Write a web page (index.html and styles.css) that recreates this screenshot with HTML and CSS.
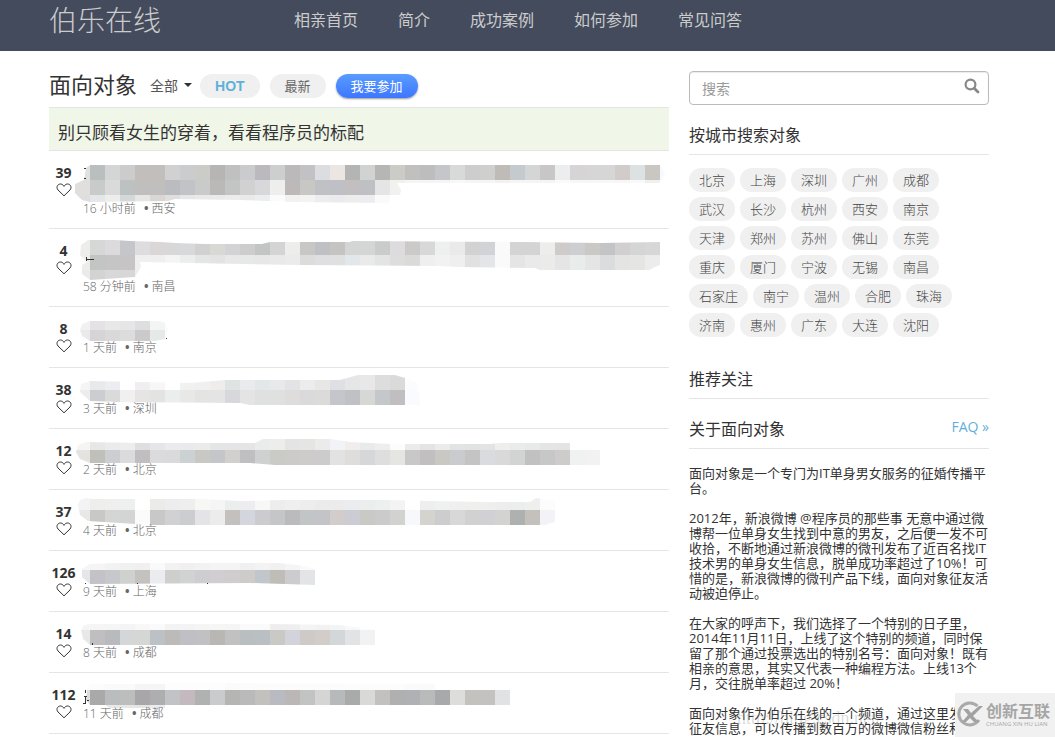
FILE: index.html
```html
<!DOCTYPE html>
<html lang="zh-CN">
<head>
  <meta charset="UTF-8">
  <meta name="viewport" content="width=device-width, initial-scale=1.0">
  <title>面向对象 - 伯乐在线</title>
  <link rel="stylesheet" href="styles.css">
</head>
<body>

  <header class="header">
    <div class="container header-inner">
      <a class="logo" href="#">伯乐在线</a>
      <nav class="nav">
        <a href="#">相亲首页</a>
        <a href="#">简介</a>
        <a href="#">成功案例</a>
        <a href="#">如何参加</a>
        <a href="#">常见问答</a>
      </nav>
    </div>
  </header>

  <div class="page">
    <div class="container columns">
      <main class="main">
        <div class="toolbar">
          <h1>面向对象</h1>
          <button class="dropdown" type="button">全部 <span class="caret"></span></button>
          <button class="pill hot" type="button">HOT</button>
          <button class="pill" type="button">最新</button>
          <button class="pill join" type="button">我要参加</button>
        </div>

        <a class="notice" href="#">别只顾看女生的穿着，看看程序员的标配</a>

        <div id="posts"></div>
      </main>

      <aside class="sidebar">
        <form class="search">
          <input type="text" id="search" placeholder="搜索" aria-label="搜索">
          <button type="submit" aria-label="搜索">
            <svg width="16" height="16" viewBox="0 0 16 16"><circle cx="6.5" cy="6.5" r="4.9" fill="none" stroke="#888" stroke-width="2.2"/><path d="M10.2 10.2L14 14" stroke="#888" stroke-width="2.8" stroke-linecap="round"/></svg>
          </button>
        </form>

        <h3>按城市搜索对象</h3>
        <div class="cities">
          <a href="#">北京</a>
          <a href="#">上海</a>
          <a href="#">深圳</a>
          <a href="#">广州</a>
          <a href="#">成都</a>
          <a href="#">武汉</a>
          <a href="#">长沙</a>
          <a href="#">杭州</a>
          <a href="#">西安</a>
          <a href="#">南京</a>
          <a href="#">天津</a>
          <a href="#">郑州</a>
          <a href="#">苏州</a>
          <a href="#">佛山</a>
          <a href="#">东莞</a>
          <a href="#">重庆</a>
          <a href="#">厦门</a>
          <a href="#">宁波</a>
          <a href="#">无锡</a>
          <a href="#">南昌</a>
          <a href="#">石家庄</a>
          <a href="#">南宁</a>
          <a href="#">温州</a>
          <a href="#">合肥</a>
          <a href="#">珠海</a>
          <a href="#">济南</a>
          <a href="#">惠州</a>
          <a href="#">广东</a>
          <a href="#">大连</a>
          <a href="#">沈阳</a>
        </div>

        <h3>推荐关注</h3>

        <h3>关于面向对象 <a class="faq" href="#">FAQ »</a></h3>
        <div class="about">
          <p>面向对象是一个专门为IT单身男女服务的征婚传播平台。</p>
          <p>2012年，新浪微博 @程序员的那些事 无意中通过微博帮一位单身女生找到中意的男友，之后便一发不可收拾，不断地通过新浪微博的微刊发布了近百名找IT技术男的单身女生信息，脱单成功率超过了10%！可惜的是，新浪微博的微刊产品下线，面向对象征友活动被迫停止。</p>
          <p>在大家的呼声下，我们选择了一个特别的日子里，2014年11月11日，上线了这个特别的频道，同时保留了那个通过投票选出的特别名号：面向对象！既有相亲的意思，其实又代表一种编程方法。上线13个月，交往脱单率超过 20%！</p>
          <p>面向对象作为伯乐在线的一个频道，通过这里发布的征友信息，可以传播到数百万的微博微信粉丝和</p>
        </div>
      </aside>
    </div>
  </div>

  <div class="blog-mark">http://blog.csdn.net/</div>
  <div class="corner-mark">
    <svg width="30" height="30" viewBox="0 0 30 30">
      <path d="M22.5 6A11 11 0 1 0 24 20" fill="none" stroke="#aaa" stroke-width="3"/>
      <path d="M8 9h5l3 4 8-7h4L18 16l6 6h-5l-4-4-4 4H7l6-7z" fill="#a2a2a2"/>
    </svg>
    <div>
      <div class="corner-name">创新互联</div>
      <div class="corner-sub">CHUANG XIN HU LIAN</div>
    </div>
  </div>

  <script src="script.js"></script>
</body>
</html>
```

FILE: styles.css
```css
* {
  box-sizing: border-box;
}
body {
  margin: 0;
  height: 100vh;
  overflow: hidden;
  background: #fff;
  color: #333;
  font-family: "Open Sans", "Noto Sans CJK SC", sans-serif;
  font-size: 13px;
}
a {
  color: inherit;
  text-decoration: none;
}
button {
  font-family: inherit;
  border: none;
  padding: 0;
  background: none;
  cursor: pointer;
}
.header,
.page {
  padding-right: 17px;
}
.container {
  max-width: 940px;
  margin: 0 auto;
}
.header {
  background: #434b5c;
}
.header-inner {
  height: 51px;
  display: flex;
  align-items: flex-start;
  color: #ccc;
}
.logo {
  width: 245px;
  font-size: 28px;
  line-height: 40px;
  font-weight: 300;
}
.nav {
  display: flex;
  gap: 40px;
  font-size: 16px;
  line-height: 40px;
}

/* two columns */
.columns {
  display: flex;
  gap: 20px;
  padding-top: 20px;
}
.main {
  flex: 1;
  min-width: 0;
}
.sidebar {
  width: 300px;
}

.toolbar {
  display: flex;
  align-items: center;
  gap: 10px;
  height: 36px;
  padding-bottom: 6px;
}
.toolbar h1 {
  margin: 0 3px 0 0;
  padding-bottom: 4px;
  font-size: 22px;
  line-height: 30px;
  font-weight: 400;
}
.dropdown {
  display: flex;
  align-items: center;
  gap: 6px;
  margin-right: -2px;
  padding-bottom: 2px;
  font-size: 14px;
  color: #555;
}
.caret {
  border: 4px solid transparent;
  border-top-color: #333;
  border-bottom: none;
}
.pill {
  height: 24px;
  padding: 0 15px 1px;
  border-radius: 12px;
  background: #f0f0f0;
  color: #666;
  font-size: 13px;
}
.pill.hot {
  color: #5fb0d8;
  font-weight: 700;
  font-family: "Liberation Sans", sans-serif;
  font-size: 14px;
}
.pill.join {
  background: linear-gradient(#5a9bff, #3d77ff);
  box-shadow: 0 1px 2px rgba(0,0,0,0.4);
  color: #fff;
}

.notice {
  display: block;
  padding: 4px 9px 0;
  border-top: 1px solid #e5e5e5;
  border-bottom: 1px solid #e5e5e5;
  background: #f0f6e8;
  font-size: 17px;
  line-height: 42px;
  height: 44px;
  overflow: hidden;
}

/* post list */
.post {
  display: flex;
  gap: 5px;
  padding: 13px 0 8px;
  border-bottom: 1px solid #e5e5e5;
}
.votes {
  width: 29px;
  display: flex;
  flex-direction: column;
  align-items: center;
  font-size: 14px;
  font-weight: 700;
  line-height: 17px;
}
.heart {
  margin-top: 2px;
}
.post-body {
  flex: 1;
}
.mosaic {
  display: block;
  margin-left: -8px;
  overflow: visible;
}
.meta {
  font-size: 12px;
  line-height: 22px;
  font-weight: 300;
  color: #666;
}
.meta .dot {
  margin-left: 5px;
  font-weight: 700;
}

/* sidebar */
.search {
  display: flex;
  align-items: center;
  height: 34px;
  margin-bottom: 19px;
  padding: 0 8px 0 12px;
  border: 1px solid #bbb;
  border-radius: 4px;
  box-shadow: inset 0 1px 1px rgba(0,0,0,0.08);
}
.search input {
  flex: 1;
  min-width: 0;
  padding: 0;
  border: none;
  outline: none;
  background: none;
  font-family: inherit;
  font-size: 14px;
}
.search input::placeholder {
  color: #999;
}
.search button {
  height: 20px;
}
.sidebar h3 {
  display: flex;
  justify-content: space-between;
  margin: 0 0 13px;
  padding-bottom: 8px;
  border-bottom: 1px solid #e5e5e5;
  font-size: 16px;
  line-height: 22px;
  font-weight: 400;
}
.cities {
  display: flex;
  flex-wrap: wrap;
  gap: 5px;
  margin-bottom: 31px;
}
.cities a {
  padding: 0 10px;
  border-radius: 12px;
  background: #f0f0f0;
  color: #444;
  line-height: 24px;
  font-weight: 300;
}
.cities + h3 {
  margin-bottom: 19px;
}
.sidebar .faq {
  color: #5fb0d8;
  font-size: 14px;
  line-height: 18px;
}
.about {
  line-height: 15px;
  padding-top: 4px;
}
.about p {
  margin: 0 0 15px;
}

/* marks over the page corner */
.blog-mark {
  position: fixed;
  right: 100px;
  bottom: 8px;
  width: 218px;
  font-family: "Liberation Serif", serif;
  font-size: 18px;
  color: rgba(120,120,120,0.25);
}
.corner-mark {
  position: fixed;
  right: 0;
  bottom: 0;
  width: 100px;
  height: 44px;
  display: flex;
  align-items: center;
  gap: 1px;
  background: #f1f1f1;
  color: #a6a6a6;
}
.corner-mark svg {
  flex: none;
}
.corner-name {
  font-size: 16px;
  line-height: 18px;
  font-weight: 700;
}
.corner-sub {
  font-size: 6px;
  line-height: 8px;
  white-space: nowrap;
}
```

FILE: script.js
```js
// Hidden titles are drawn as strips of 15px tiles cut to a brush outline.
// strip: [y, height, tile colours from left]
const posts = [
  { votes: 39, time: '16 小时前', city: '西安', height: 34,
    outline: '15,1 585,1 590,10 585,19 322,19 326,26 325,31 312,39 219,38 165,36 100,35 93,37 15,38 7,36 0,29 0,20 9,16 11,4',
    strips: [
      [1, 15, 'e0e0de b9bebf d3d6d5 cccccc c1bebc c1bebc d0d1d0 caccce cbccc8 b6b5b3 bfc0bf c9cbcc bcb9be cdcfcf bcb9ba c2c2c4 dcdde0 ebe6e2 b4b4b4 d1d3d2 b6b6b4 caccc5 c1c0bf bdbdbd c5c6c9 d8dad9 cdcdcd cfcfcd bfbcb7 c4cacd d4d6d5 c9c6c8 ecedef d7d4d6 d7d6d7 d7d6d7 d1ccca dce1e1 cac6c2 f6fafe'],
      [16, 15, 'e0dfde c9cbca dadada bcc1c2 c0bfbd c0bfbd babcbf c2c3c7 c9caca bab9b8 c3c4c4 d1d1d1 d8d8db eeeeec bcb9b8 c8c7c4 c0c1c5 bfc0c5 c3bfc0 bfc0c4 e5e5e5 f1f1f0 f5f5f5 f5f5f5 f5f5f5 f8f8f8 f5f5f5 f5f5f5 f2f2f2 f5f5f5 f5f5f5 f5f5f5 fafafa f7f7f7 f7f7f7 f7f7f7 f7f7f7 f9f9f9 f0f0f0'],
      [31, 9, 'dedede e4e7e9 ededec d5d7da e6e6e5 d8d7d6 e0dfdd e6e7e8 e9e9e9 eaeaea ececec e9e9e9 ebedee fbfbfb f1f1f0 f3f3f3 ecedef ebebee eeeded ededf0 fafafa']
    ],
    ink: 'M9 4h2v1h-2zM9 14h2v1h-2z' },
  { votes: 4, time: '58 分钟前', city: '南昌', height: 34,
    outline: '13,-2 40,-2 55,-1 85,0 101,1 130,2 187,2 195,0 275,0 277,-1 450,0 525,1 585,0 585,23 580,25 574,28 465,28 460,26 383,25 365,24 225,23 65,20 66,25 60,35 15,38 7,32 7,23 12,20 5,13 6,3',
    strips: [
      [-2, 15, 'ededec d5d8d7 dcdadc c5c6c9 dedcde dbd6d8 d8d8d9 d8d9da d0d1d0 d8d9d5 d3d3d5 cdcdcd c3c5c4 d4d4d4 ededec c8c7c5 bfc0c3 c5c4c2 d4d6d5 d4d6d5 c9cccb dddbdd cbcac9 d8d8d8 eeefef eaeaea d2d2d3 d2d3d7 fafafa d4d4d4 d4d4d4 ededec cecbca cdced1 cbc9c5 c3c4c6 d2cfd1 d6d5d6 d7d7d7'],
      [13, 15, 'ededec c3c5c4 c6c5c5 c6c4c5 f0eff0 efefef f4f4f4 ebeeec e4e6e5 e2e3e2 e8e8e9 e7e8e8 e7e7e8 e9e9e9 ebebeb dcdcda dfdee0 dfe0e0 e2e7ea eaeaea e3e4e4 dddddd dadad8 efefef f2f2f2 efefef e1e1e1 e4e5e8 fafafa e5e5e5 eaeaea ebebe9 e5e5e5 e8eceb e5e5e5 dbdcde e4e4e2 e5e5e3 ececec'],
      [28, 10, 'ebebeb d3d3d3 d9d8d9 d7d7d7 eeeeee']
    ],
    ink: 'M11 17h8v1h-8zM11 15h1v4h-1z' },
  { votes: 8, time: '1 天前', city: '南京', height: 17,
    outline: '15,1 85,1 90,3 93,10 90,19 80,21 15,21 7,16 5,10 7,4',
    strips: [
      [0, 10, 'f0f1f0 e4e2e4 e8e8e8 e6e6e6 dedddf f3f5f4 fafafa'],
      [10, 12, 'eaeaea d6d4d6 d9d9d9 dcdcdc ccc9cb e5e9e8 fafafa']
    ],
    ink: 'M91 18h1v1h-1z' },
  { votes: 38, time: '3 天前', city: '深圳', height: 17,
    outline: '15,0 115,2 150,-1 265,-1 283,-6 320,-6 330,-3 343,2 345,24 175,24 165,22 45,21 15,20 5,11 6,3',
    strips: [
      [-6, 15, 'f5f5f5 e8e9eb ecedf0 ffffff efeff1 f7f7f7 ffffff f1f2f0 f0f0f0 eeedec dfe3e2 eaebed e4e7e7 e8e9ea e3e3e6 ececec e7e7e5 dfe0e4 e6e6e7 e8e8e8 dddddd dadadb fafcfe'],
      [9, 15, 'ececec cccdd0 d9dad9 f0f0f0 e6e5e4 e3e3e1 eaeeec e8e8e6 e4e4e2 e4e4e4 d7d8db e4e4e4 dfe1e0 dfe1e1 dedddb dadadd dcdbda c4c6cb bfc1c5 d7d7d5 c5c8ca c1bebf fafbfe']
    ] },
  { votes: 12, time: '2 天前', city: '北京', height: 17,
    outline: '11,0 65,1 180,1 188,-3 255,-3 275,0 315,2 415,2 425,1 495,1 495,8 525,8 525,23 200,23 175,21 15,21 5,17 1,10 3,3',
    strips: [
      [-7, 15, 'f5f5f4 e7e8e6 ebebeb ededed dfdfe1 e6e6e8 ebebed eaeaed ebebec e3e6e5 e5e5e8 e5e5e5 eaebeb ededec e4e4e4 e5e5e3 ebebeb f1f3f6 efeeec e9ebea eeeeee fcfdfb ebebeb e4e5e3 e9eceb e2e3e3 e1e3e3 e2e3e3 eeeeec e9ecea e7eae7 e4e6e5 e4e4e4 fcfcfc'],
      [8, 15, 'e4e3e0 bfc0b9 cdced1 dbdbdd c1bebf dbdbdd dadada ccd2d4 cac8c5 c5c6ca d1d0ce bfbfc1 cfd1d0 cacac7 cdcbc9 cdcccb cccccc e2e2e2 dfdddc d5d7d9 dedede e5e5e2 c8c8c8 c2bfc0 cac8c3 c9cbce c4c4c4 d9dbde d9d9d9 d1d4d3 c1c1c1 c7c7c7 cdccca eff2f0 f2f2f2']
    ] },
  { votes: 37, time: '4 天前', city: '北京', height: 17,
    outline: '11,-5 17,-4 125,-4 165,-2 210,-3 313,-3 355,-2 415,-1 455,-1 461,-5 470,-4 480,-2 480,19 470,22 75,22 45,20 13,18 5,12 3,2 5,-3',
    strips: [
      [-8, 15, 'f3f3f3 eeefed efefef edf0ef ffffff ebebea ecedec eeeeee f7f7f5 f5f5f5 eceeed ededef f7f7f6 ededed efefef ededed ebebea ebebeb ebeced ebeeed ecf0ef f2f3f2 ffffff edeeed eff1f1 efefef efefee efefed ededed eceeed efefee fcfcfc'],
      [7, 15, 'e8e8e8 c8c8c7 d5d6d4 d3d5d5 fbfbfb c8c8c8 d1d0d2 cccdd0 e4e4e6 ececec c4c0bd d4d6de ccccd0 c4c6c8 bbbabc c1c5c5 c4c4c8 d2cdcc ccccd4 c9c9c6 cbcbcb d2d2d1 f7f8fb d4d3ce cdcdcf d8d8d8 d1d1d1 d1d1d5 d3d3d1 afb1b1 c4c1bd f2f2f7']
    ] },
  { votes: 126, time: '9 天前', city: '上海', height: 17,
    outline: '15,0 40,-1 205,-1 230,2 240,5 240,21 175,19 15,20 7,13 7,5',
    strips: [
      [-1, 7, 'f5f5f5 f5f5f5 f2f2f2 f1f1f1 f0f0f0 fafafa f2f2f2 f0f0f0 f2f2f2 f4f4f4 f4f4f4 f0f0f0 f3f3f3 f1f1f1 f5f5f5 fafafa'],
      [6, 15, 'e4e6e7 c4c2c6 c6c8cc cfd1cf c3c2bf ebecf0 cececd d1d2d2 ceced0 d0ced1 cfcdce cdcccb c0c6ca c0bdb9 cccccf e3e4e6']
    ],
    ink: 'M10 19h1v1h-1zM62 19h1v1h-1zM132 19h1v1h-1z' },
  { votes: 14, time: '8 天前', city: '成都', height: 17,
    outline: '15,-1 195,-1 265,0 285,3 300,5 300,20 15,20 8,14 6,5 9,0',
    strips: [
      [-1, 6, 'f5f5f5 f5f5f5 f5f5f5 f4f4f4 f8f8f8 fafafa f3f3f3 f3f3f3 f5f5f5 f6f6f6 f5f5f5 fafafa fafafa eeeeee eeeeee f4f4f4 f2f2f2 f4f4f4 f8f8f8 fcfcfc'],
      [5, 15, 'e8e8e8 c0bec1 b8babd d4d7d7 d5d7d5 bbc1c4 bcbbb9 c0bfc5 c1c1c4 b9b7b4 c1c1c1 b9bfc1 b9bfc2 cbc9c5 d3d4db cdcac8 d3cdca d2d7da e2e3e5 f2f2f2']
    ],
    ink: 'M17 18h1v2h-1z' },
  { votes: 112, time: '11 天前', city: '成都', height: 17,
    outline: '15,-2 90,-2 90,-3 435,-2 435,19 90,19 90,22 35,22 30,19 15,19 11,14 12,4',
    strips: [
      [-3, 7, 'fcfcfc fcfcfc fafafa fafafa f5f5f5 f5f5f5 fdfdfd fdfdfd fdfdfd fdfdfd fbfbfb fcfcfc fcfcfc fcfcfc fcfcfc fcfcfc fcfcfc fcfcfc fcfcfc fcfcfc fcfcfc fcfcfc fafafa fafafa'],
      [4, 15, 'dcdcdc a9a9aa b9bdbf bbbebd a8a6a9 aeadaf c1c3c6 c4b9be afb2b1 c9cbcc b5b5b3 b9bab9 c3c1be babbc2 bab7b6 c2c4c4 d5d5d3 b7babb a9aaaa d9dad7 c2c1bf b0b0b0 b0b1b5 b8bbb9 a8a9ab dddddb c3c2bf c3c2bf e1e2e5'],
      [19, 4, 'ffffff f0f0f0 e9e9e9 e7e7e7 e4e4e4 ececec']
    ],
    ink: 'M10 4h1v3h-1zM9 10h3v1h-3zM10 11h1v6h-1zM8 17h3v1h-3zM12 14h2v1h-2z' }
];

function mosaic(post, id) {
  const tiles = post.strips.map(([y, h, colours]) =>
    colours.split(' ').map((c, i) =>
      `<rect x="${i * 15}" y="${y}" width="15" height="${h}" fill="#${c}"/>`
    ).join('')
  ).join('');

  return `
    <svg class="mosaic" width="585" height="${post.height}" shape-rendering="crispEdges">
      <clipPath id="brush${id}"><polygon points="${post.outline}"/></clipPath>
      <g clip-path="url(#brush${id})">${tiles}</g>
      <path d="${post.ink || ''}" fill="#333"/>
    </svg>`;
}

document.getElementById('posts').innerHTML = posts.map((post, i) => `
  <article class="post">
    <div class="votes">
      <span>${post.votes}</span>
      <svg class="heart" width="16" height="14" viewBox="0 0 16 14"><path d="M8 12.8L2 7C-.6 3.600 2.400.8 4.600 1 6.400 1.100 7.400 2.200 8 3.400 8.600 2.200 9.600 1.100 11.400 1 13.600.8 16.600 3.600 14 7z" fill="#fff" stroke="#333" stroke-width="1"/></svg>
    </div>
    <div class="post-body">
      ${mosaic(post, i)}
      <div class="meta">${post.time} <span class="dot">•</span> ${post.city}</div>
    </div>
  </article>
`).join('');
```
